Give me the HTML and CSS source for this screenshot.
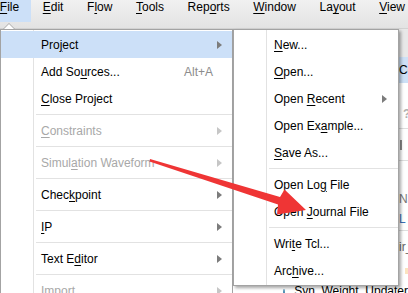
FILE: index.html
```html
<!DOCTYPE html>
<html lang="en">
<head>
  <meta charset="UTF-8" />
  <title>File menu</title>
  <link rel="stylesheet" href="styles.css">
</head>
<body>
  <div class="app">
    <div class="menubar">
      <span class="mb-item active"><u>F</u>ile</span>
      <span class="mb-item"><u>E</u>dit</span>
      <span class="mb-item">F<u>l</u>ow</span>
      <span class="mb-item"><u>T</u>ools</span>
      <span class="mb-item">Rep<u>o</u>rts</span>
      <span class="mb-item"><u>W</u>indow</span>
      <span class="mb-item">La<u>y</u>out</span>
      <span class="mb-item"><u>V</u>iew</span>
    </div>

    <div class="workspace">
      <div class="ws-toolbar"></div>
      <div class="ws-row ws-tab">Compile Order</div>
      <div class="ws-row ws-help"><span class="help">?</span></div>
      <div class="ws-row ws-bar"><span class="vbar"></span></div>
      <div class="ws-row ws-props">
        <span class="ws-label">Name</span>
        <span class="ws-link">L</span>
      </div>
      <div class="ws-row ws-src">
        <span class="ws-file">ir_</span>
        <span class="ws-warn"></span>
      </div>
      <div class="ws-tree"><span class="dot"></span>Syn_Weight_Updater</div>
    </div>
  </div>

  <div class="notch"></div>

  <div class="menu menu-file">
    <div class="item active"><span class="label">Pro<u>j</u>ect</span><span class="sub on"></span></div>
    <div class="item"><span class="label">Add So<u>u</u>rces...</span><span class="key">Alt+A</span><span class="sub"></span></div>
    <div class="item"><span class="label"><u>C</u>lose Project</span><span class="sub"></span></div>
    <div class="sep"></div>
    <div class="item off"><span class="label"><u>C</u>onstraints</span><span class="sub on"></span></div>
    <div class="sep"></div>
    <div class="item off"><span class="label">Simul<u>a</u>tion Waveform</span><span class="sub on"></span></div>
    <div class="sep"></div>
    <div class="item"><span class="label">Chec<u>k</u>point</span><span class="sub on"></span></div>
    <div class="sep"></div>
    <div class="item"><span class="label"><u>I</u>P</span><span class="sub on"></span></div>
    <div class="sep"></div>
    <div class="item"><span class="label">Text E<u>d</u>itor</span><span class="sub on"></span></div>
    <div class="sep"></div>
    <div class="item off"><span class="label">I<u>m</u>port</span><span class="sub on"></span></div>
  </div>

  <div class="menu menu-project">
    <div class="item"><span class="label"><u>N</u>ew...</span><span class="sub"></span></div>
    <div class="item"><span class="label"><u>O</u>pen...</span><span class="sub"></span></div>
    <div class="item"><span class="label">Open <u>R</u>ecent</span><span class="sub on"></span></div>
    <div class="item"><span class="label">Open Ex<u>a</u>mple...</span><span class="sub"></span></div>
    <div class="item"><span class="label"><u>S</u>ave As...</span><span class="sub"></span></div>
    <div class="sep"></div>
    <div class="item"><span class="label">Open Lo<u>g</u> File</span><span class="sub"></span></div>
    <div class="item"><span class="label">Open <u>J</u>ournal File</span><span class="sub"></span></div>
    <div class="sep"></div>
    <div class="item"><span class="label">Wri<u>t</u>e Tcl...</span><span class="sub"></span></div>
    <div class="item"><span class="label">Arc<u>h</u>ive...</span><span class="sub"></span></div>
  </div>

  <!-- red annotation arrow drawn on top of the screenshot -->
  <svg class="annot" width="408" height="293" viewBox="0 0 408 293">
    <polygon points="150,159 280,197 284.5,189.5 306,210 277,214.5 278,204.5 149.5,161.5" fill="#ef3535" />
  </svg>
</body>
</html>
```

FILE: styles.css
```css
* {
  margin: 0;
  padding: 0;
  box-sizing: border-box;
}
body {
  width: 408px;
  height: 293px;
  overflow: hidden;
  position: relative;
  font-family: 'Liberation Sans', Arial, sans-serif;
  font-size: 12px;
  color: #000;
  background: #fff;
}
u {
  text-underline-offset: 2px;
}

/* background window */
.menubar {
  display: flex;
  height: 29px;
  margin-left: -12px;
  background: linear-gradient(#f1f1f1, #e3e3e3);
  border-bottom: 1px solid #d2d2d2;
}
.mb-item {
  padding: 0 11.8px 8px;
  line-height: 14px;
  height: 22px;
  white-space: nowrap;
}
.mb-item.active {
  background: #cce0f8;
}
.workspace {
  display: flex;
  flex-direction: column;
}
.ws-toolbar {
  height: 28px;
  background: #e8e8e8;
}
.ws-row {
  display: flex;
  padding-left: 399px;
  white-space: nowrap;
  border-bottom: 1px solid #dedede;
}
.ws-tab {
  height: 26px;
  line-height: 26px;
  background: #cde0f6;
  border-bottom: none;
}
.ws-help {
  height: 46px;
  padding-top: 25px;
  padding-left: 403px;
}
.help {
  color: #b0b0b0;
  font-weight: bold;
  line-height: 12px;
}
.ws-bar {
  height: 32px;
  padding-top: 11px;
}
.vbar {
  width: 2px;
  height: 10px;
  margin-left: 1px;
  background: #8a8a8a;
}
.ws-props {
  height: 70px;
  flex-direction: column;
  padding-top: 31px;
  color: #777;
}
.ws-link {
  color: #3a6fb5;
  margin-top: 6px;
}
.ws-src {
  height: 52px;
  flex-direction: column;
  padding-top: 9px;
  border-bottom: none;
  color: #666;
}
.ws-warn {
  width: 4px;
  height: 6px;
  margin: 14px 0 0 6px;
  background: #fbe3c0;
}
.ws-tree {
  display: flex;
  align-items: center;
  gap: 9px;
  padding-left: 283px;
  line-height: 16px;
  white-space: nowrap;
}
.dot {
  width: 10px;
  height: 10px;
  margin-top: 6px;
  border-radius: 50%;
  background: #4b8db3;
}

/* popup menus */
.notch {
  position: absolute;
  left: 3px;
  top: 23px;
  border-left: 6px solid transparent;
  border-right: 6px solid transparent;
  border-bottom: 6px solid #a8a8a8;
}
.notch::after {
  content: "";
  position: absolute;
  left: -5px;
  top: 1px;
  border-left: 5px solid transparent;
  border-right: 5px solid transparent;
  border-bottom: 5px solid #fff;
}
.menu {
  position: absolute;
  top: 29px;
  padding: 1px 0;
  border: 1px solid #a3a3a3;
  background: linear-gradient(to right, #fff 32px, #e2e2e2 32px, #e2e2e2 33px, #fff 33px);
}
.menu-file {
  left: 0;
  width: 233px;
  height: 300px;
}
.menu-project {
  left: 233px;
  width: 166px;
  box-shadow: 2px 2px 3px rgba(0, 0, 0, 0.35);
}
.item {
  display: flex;
  align-items: center;
  height: 27px;
  padding: 0 10px 0 40px;
  white-space: nowrap;
}
.item.active {
  background: #cce0f8;
}
.item.off {
  color: #a8a8a8;
}
.label {
  flex: 1;
}
.key {
  color: #8c8c8c;
}
.sub {
  width: 5px;
  height: 8px;
  margin-left: 4px;
}
.sub.on {
  width: 0;
  height: 0;
  border-left: 5px solid #7c7c7c;
  border-top: 4px solid transparent;
  border-bottom: 4px solid transparent;
}
.item.off .sub.on {
  border-left-color: #c6c6c6;
}
.menu-project .sub {
  margin-right: 1px;
}
.sep {
  height: 1px;
  margin: 2px 0 2px 35px;
  background: #e2e2e2;
}

.annot {
  position: absolute;
  left: 0;
  top: 0;
  pointer-events: none;
}
```
